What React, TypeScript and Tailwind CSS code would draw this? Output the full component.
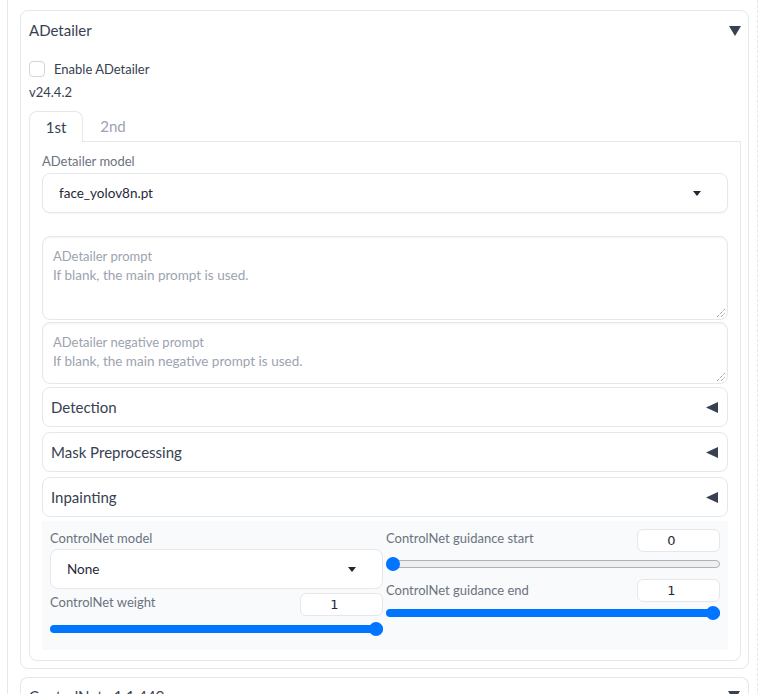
import React from "react";

const FONT = { fontFamily: "Lato, 'Noto Sans', sans-serif" };

function TriDown({ className = "" }: { className?: string }) {
  return (
    <svg width="12" height="10" viewBox="0 0 12 10" className={className}>
      <polygon points="0,0 12,0 6,10" fill="#374151" />
    </svg>
  );
}

function TriLeft() {
  return (
    <svg width="12" height="11" viewBox="0 0 12 11">
      <polygon points="12,0 12,11 0,5.5" fill="#374151" />
    </svg>
  );
}

function SmallCaret() {
  return (
    <svg width="8" height="5" viewBox="0 0 8 5">
      <polygon points="0,0 8,0 4,5" fill="#1f2937" />
    </svg>
  );
}

function ResizeHandle() {
  return (
    <svg width="9" height="9" viewBox="0 0 9 9" className="absolute right-[2px] bottom-[2px]">
      <line x1="1" y1="9" x2="9" y2="1" stroke="#6b7280" strokeWidth="1" strokeDasharray="1 1" />
      <line x1="5" y1="9" x2="9" y2="5" stroke="#6b7280" strokeWidth="1" strokeDasharray="1 1" />
    </svg>
  );
}

function Accordion({ title }: { title: string }) {
  return (
    <div className="flex h-[40px] items-center justify-between rounded-lg border border-[#e5e7eb] bg-white pl-[8px] pr-[9px]">
      <span className="text-[15px] text-[#374151]">{title}</span>
      <TriLeft />
    </div>
  );
}

function Slider({ pct, filled }: { pct: number; filled: boolean }) {
  return (
    <div className="relative h-[14px] w-full">
      {filled ? (
        <div className="absolute left-0 right-0 top-[3px] h-[8px] rounded-full bg-[#0075ff]" />
      ) : (
        <div className="absolute left-0 right-0 top-[3px] h-[8px] rounded-full border border-[#b2b2b2] bg-[#efefef]" />
      )}
      <div
        className="absolute top-0 h-[14px] w-[14px] rounded-full bg-[#0075ff]"
        style={{ left: `calc(${pct}% - ${(pct / 100) * 14}px)` }}
      />
    </div>
  );
}

function NumBox({ value }: { value: string }) {
  return (
    <div
      className="flex h-[23px] w-[83px] items-center justify-center rounded-md border border-[#e5e7eb] bg-white pr-[14px] text-[13px] text-[#1f2937]"
      style={{ fontFamily: "'DejaVu Sans', sans-serif" }}
    >
      {value}
    </div>
  );
}

export default function App() {
  return (
    <div className="h-[694px] w-[772px] overflow-hidden bg-white" style={FONT}>
      <div
        className="ml-[7px] w-[751px] border-l border-r border-l-[#e5e7eb] border-r-[#e5e7eb] pl-[12px] pr-[8px] pt-[10px]"
        style={{ borderRightStyle: "dashed" }}
      >
        {/* ADetailer panel */}
        <div className="rounded-lg border border-[#e5e7eb] bg-white pl-[8px] pr-[7px] pb-[7px]">
          <div className="flex items-center justify-between pt-[9px]">
            <span className="text-[15px] leading-[20px] text-[#374151]">ADetailer</span>
            <TriDown className="mt-[1px]" />
          </div>
          <div className="mt-[21px] flex h-[16px] items-center gap-[9px]">
            <div className="h-[16px] w-[16px] rounded-[4px] border border-[#d1d5db] bg-white" />
            <span className="mt-[1px] text-[13px] text-[#374151]">Enable ADetailer</span>
          </div>
          <div className="mt-[5px] text-[13px] leading-[20px] text-[#374151]">v24.4.2</div>

          {/* Tabs */}
          <div className="mt-[9px] flex h-[31px] items-end">
            <div className="flex h-[31px] w-[54px] items-center justify-center rounded-t-lg border border-b-0 border-[#e5e7eb] bg-white text-[15px] text-[#374151]">
              1st
            </div>
            <div className="flex h-[31px] w-[60px] items-center justify-center border-b border-[#e5e7eb] text-[15px] text-[#9ca3af]">
              2nd
            </div>
            <div className="h-[31px] flex-1 border-b border-[#e5e7eb]" />
          </div>
          <div className="rounded-b-lg border border-t-0 border-[#e5e7eb] px-[12px] pt-[9px] pb-[10px]">
            <div className="text-[13px] leading-[20px] text-[#6b7280]">ADetailer model</div>
            <div className="mt-[2px] flex h-[40px] items-center justify-between rounded-lg border border-[#e5e7eb] bg-white pl-[16px] pr-[26px] shadow-[0_1px_2px_rgba(0,0,0,0.04)]">
              <span className="text-[13.5px] text-[#1f2937]">face_yolov8n.pt</span>
              <SmallCaret />
            </div>

            <div className="relative mt-[23px] h-[84px] rounded-lg border border-[#e5e7eb] bg-white px-[10px] pt-[9px] shadow-[inset_0_1px_2px_rgba(0,0,0,0.05)]">
              <div className="text-[13px] leading-[20px] text-[#9ca3af]">ADetailer prompt</div>
              <div className="text-[13.5px] leading-[18px] text-[#9ca3af]">If blank, the main prompt is used.</div>
              <ResizeHandle />
            </div>
            <div className="relative mt-[2px] h-[62px] rounded-lg border border-[#e5e7eb] bg-white px-[10px] pt-[9px] shadow-[inset_0_1px_2px_rgba(0,0,0,0.05)]">
              <div className="text-[13px] leading-[20px] text-[#9ca3af]">ADetailer negative prompt</div>
              <div className="text-[13.5px] leading-[18px] text-[#9ca3af]">If blank, the main negative prompt is used.</div>
              <ResizeHandle />
            </div>

            <div className="mt-[3px] flex flex-col gap-[5px]">
              <Accordion title="Detection" />
              <Accordion title="Mask Preprocessing" />
              <Accordion title="Inpainting" />
            </div>

            {/* ControlNet settings area */}
            <div className="mt-[4px] flex h-[129px] gap-[3px] bg-[#f9fafb] px-[8px] pt-[7px]">
              <div className="flex w-[333px] flex-col">
                <div className="text-[13px] leading-[20px] text-[#6b7280]">ControlNet model</div>
                <div className="mt-[1px] flex h-[40px] items-center justify-between rounded-lg border border-[#e5e7eb] bg-white pl-[16px] pr-[26px]">
                  <span className="text-[13.5px] text-[#1f2937]">None</span>
                  <SmallCaret />
                </div>
                <div className="mt-[3px] flex items-start justify-between">
                  <span className="text-[13px] leading-[20px] text-[#6b7280]">ControlNet weight</span>
                  <div className="mt-[1px]">
                    <NumBox value="1" />
                  </div>
                </div>
                <div className="mt-[6px]">
                  <Slider pct={100} filled />
                </div>
              </div>
              <div className="flex flex-1 flex-col">
                <div className="flex items-start justify-between">
                  <span className="text-[13px] leading-[20px] text-[#6b7280]">ControlNet guidance start</span>
                  <div className="mt-[1px]">
                    <NumBox value="0" />
                  </div>
                </div>
                <div className="mt-[5px]">
                  <Slider pct={0} filled={false} />
                </div>
                <div className="mt-[9px] flex items-start justify-between">
                  <span className="text-[13px] leading-[20px] text-[#6b7280]">ControlNet guidance end</span>
                  <div className="-mt-[1px]">
                    <NumBox value="1" />
                  </div>
                </div>
                <div className="mt-[4px]">
                  <Slider pct={100} filled />
                </div>
              </div>
            </div>
          </div>
        </div>

        {/* ControlNet panel (cut off) */}
        <div className="mt-[8px] rounded-t-lg border border-b-0 border-[#e5e7eb] bg-white pl-[8px] pr-[8px] pt-[8px]">
          <div className="flex items-center justify-between">
            <span className="text-[15px] leading-[20px] text-[#374151]">ControlNet v1.1.449</span>
            <TriDown />
          </div>
        </div>
      </div>
    </div>
  );
}
